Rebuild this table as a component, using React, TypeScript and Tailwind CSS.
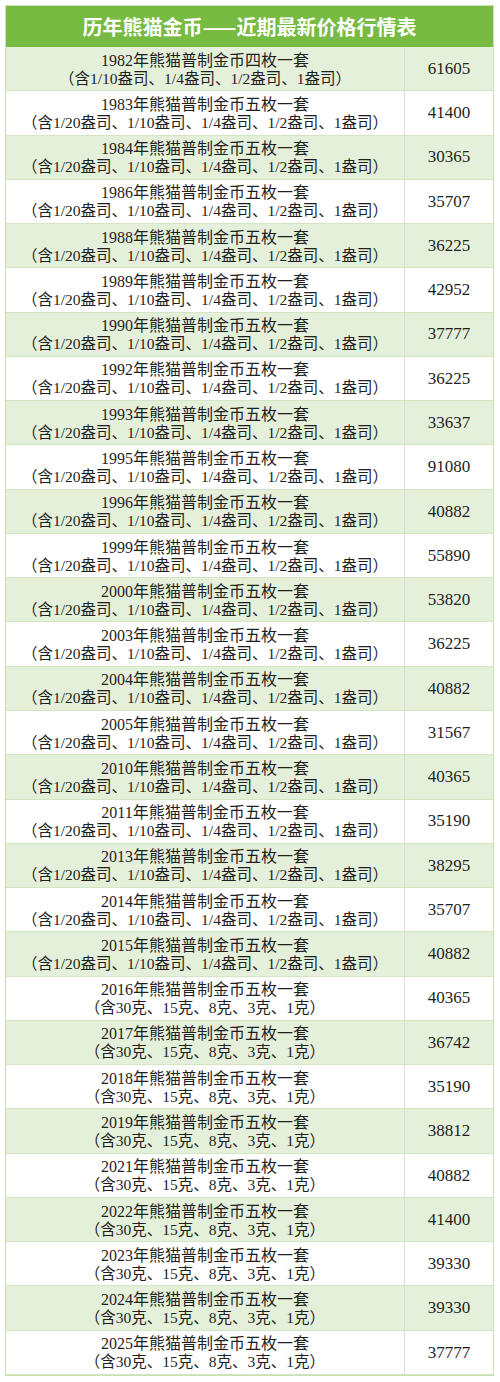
import React from "react";

type Row = { year: string; n: string; kind: "oz4" | "oz5" | "g"; price: string };

const rows: Row[] = [
  { year: "1982", n: "四", kind: "oz4", price: "61605" },
  { year: "1983", n: "五", kind: "oz5", price: "41400" },
  { year: "1984", n: "五", kind: "oz5", price: "30365" },
  { year: "1986", n: "五", kind: "oz5", price: "35707" },
  { year: "1988", n: "五", kind: "oz5", price: "36225" },
  { year: "1989", n: "五", kind: "oz5", price: "42952" },
  { year: "1990", n: "五", kind: "oz5", price: "37777" },
  { year: "1992", n: "五", kind: "oz5", price: "36225" },
  { year: "1993", n: "五", kind: "oz5", price: "33637" },
  { year: "1995", n: "五", kind: "oz5", price: "91080" },
  { year: "1996", n: "五", kind: "oz5", price: "40882" },
  { year: "1999", n: "五", kind: "oz5", price: "55890" },
  { year: "2000", n: "五", kind: "oz5", price: "53820" },
  { year: "2003", n: "五", kind: "oz5", price: "36225" },
  { year: "2004", n: "五", kind: "oz5", price: "40882" },
  { year: "2005", n: "五", kind: "oz5", price: "31567" },
  { year: "2010", n: "五", kind: "oz5", price: "40365" },
  { year: "2011", n: "五", kind: "oz5", price: "35190" },
  { year: "2013", n: "五", kind: "oz5", price: "38295" },
  { year: "2014", n: "五", kind: "oz5", price: "35707" },
  { year: "2015", n: "五", kind: "oz5", price: "40882" },
  { year: "2016", n: "五", kind: "g", price: "40365" },
  { year: "2017", n: "五", kind: "g", price: "36742" },
  { year: "2018", n: "五", kind: "g", price: "35190" },
  { year: "2019", n: "五", kind: "g", price: "38812" },
  { year: "2021", n: "五", kind: "g", price: "40882" },
  { year: "2022", n: "五", kind: "g", price: "41400" },
  { year: "2023", n: "五", kind: "g", price: "39330" },
  { year: "2024", n: "五", kind: "g", price: "39330" },
  { year: "2025", n: "五", kind: "g", price: "37777" },
];

const sub: Record<Row["kind"], string> = {
  oz4: "（含1/10盎司、1/4盎司、1/2盎司、1盎司）",
  oz5: "（含1/20盎司、1/10盎司、1/4盎司、1/2盎司、1盎司）",
  g: "（含30克、15克、8克、3克、1克）",
};

export default function App() {
  return (
    <div className="w-[500px] h-[1382px] bg-white pt-[5px] pl-[5px]">
      <div className="w-[489px] h-[1371px] flex flex-col border border-[#c9e0b4] text-[#1f1f1f]">
        <div className="h-[41px] shrink-0 bg-[#77bb42] flex items-center justify-center text-white text-[20px] font-bold font-['Noto_Sans_CJK_SC',sans-serif]">
          历年熊猫金币——近期最新价格行情表
        </div>
        <div className="flex-1 grid grid-rows-[repeat(30,minmax(0,1fr))]">
          {rows.map((r, i) => (
            <div
              key={r.year}
              className={
                i % 2 === 0
                  ? "flex bg-[#e5f0da] border-b border-[#d3e6c2]"
                  : "flex bg-white border-b border-[#d3e6c2]"
              }
            >
              <div className="w-[399px] flex flex-col items-center justify-center border-r border-[#dcdcdc] font-['Liberation_Serif','Noto_Sans_CJK_SC',serif] pt-[1px]">
                <div className="text-[16px] leading-[19px]">
                  {r.year}年熊猫普制金币{r.n}枚一套
                </div>
                <div className="text-[15.5px] leading-[18px]">{sub[r.kind]}</div>
              </div>
              <div className="flex-1 flex items-center justify-center text-[17px] font-['Liberation_Serif',serif]">
                {r.price}
              </div>
            </div>
          ))}
        </div>
      </div>
    </div>
  );
}
